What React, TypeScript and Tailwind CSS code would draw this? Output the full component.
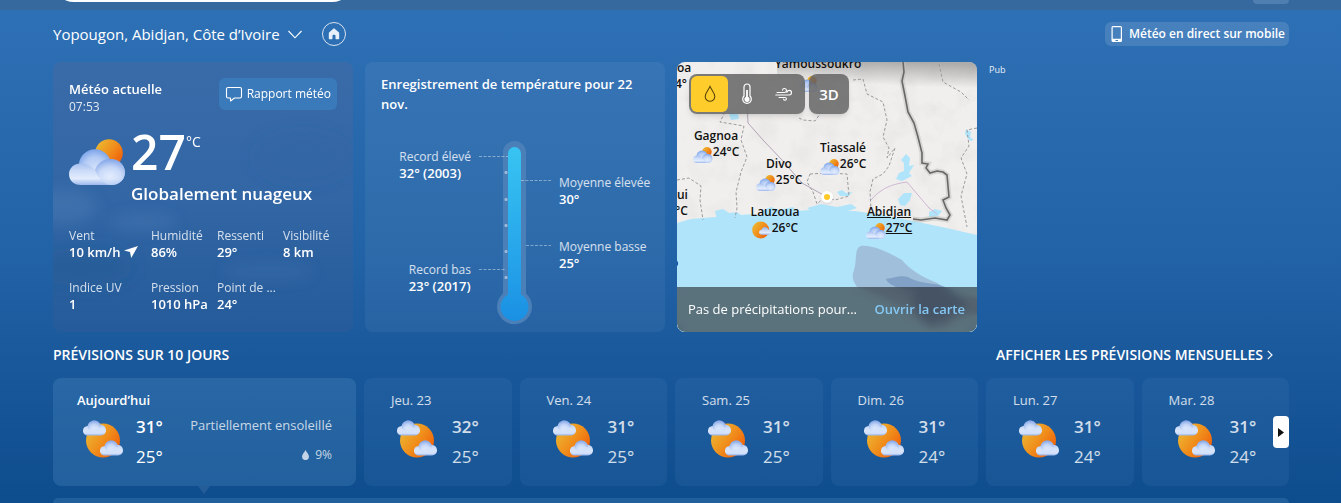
import type { ReactNode } from "react";

function SharedDefs() {
  return (
    <svg className="absolute h-0 w-0" aria-hidden="true">
      <defs>
        <linearGradient id="sun" x1="0.1" y1="0.2" x2="0.9" y2="0.8">
          <stop offset="0" stopColor="#ecb32f" />
          <stop offset="0.5" stopColor="#f08f1c" />
          <stop offset="1" stopColor="#f0620b" />
        </linearGradient>
        <radialGradient id="cloudBack" cx="0.5" cy="0.6" r="0.6">
          <stop offset="0" stopColor="#d3e1fa" />
          <stop offset="0.6" stopColor="#b3cbf5" />
          <stop offset="1" stopColor="#7ba3ea" />
        </radialGradient>
        <radialGradient id="cloudPuff" cx="0.5" cy="0.65" r="0.65">
          <stop offset="0" stopColor="#e6eefd" />
          <stop offset="0.55" stopColor="#c6d8f8" />
          <stop offset="1" stopColor="#7c9fe4" />
        </radialGradient>
        <linearGradient id="cloudFront" x1="0" y1="0" x2="0" y2="1">
          <stop offset="0" stopColor="#8fafec" />
          <stop offset="0.45" stopColor="#cbdbf8" />
          <stop offset="0.75" stopColor="#e2ecfd" />
          <stop offset="1" stopColor="#9db8ee" />
        </linearGradient>
      </defs>
    </svg>
  );
}

function MostlyCloudy({ className }: { className: string }) {
  return (
    <svg viewBox="0 0 56 46" className={className} aria-hidden="true">
      <circle cx="40" cy="14" r="13.8" fill="url(#sun)" />
      <circle cx="26" cy="26.5" r="16.2" fill="url(#cloudBack)" />
      <path
        d="M11.5 46C5 46 0 41.5 0 35.2 0 29 5 24.4 11.5 24.4c6 0 10 2.200 14.5 6.600C28.500 24.500 34 20 41.500 20 50 20 56 26 56 33.300 56 40.500 50.500 46 43 46Z"
        fill="url(#cloudFront)"
      />
      <path d="M26 31c2.500-6.500 8-11 15.500-11C50 20 56 26 56 33.300 56 40.500 50.500 46 43 46 34 46 29 38 26 31Z" fill="url(#cloudPuff)" opacity="0.7" />
    </svg>
  );
}

const smallCloud =
  "M5 15C2 15 0 13 0 10.200 0 7.500 2 5.600 4.600 5.500 5.400 2.300 8 0 11.200 0c3 0 5.500 1.800 6.500 4.600C20.800 4.500 23 6.800 23 9.800 23 12.800 20.800 15 18 15Z";

function PartlySunny({ className }: { className: string }) {
  return (
    <svg viewBox="0 0 41 38" className={className} aria-hidden="true">
      <circle cx="20" cy="20.500" r="17" fill="url(#sun)" />
      {["translate(0 0.500)", "translate(17 20.500)"].map((t) => (
        <g key={t} transform={t}>
          <path d={smallCloud} fill="url(#cloudFront)" />
          <circle cx="11.200" cy="6.500" r="6.400" fill="url(#cloudPuff)" opacity="0.75" />
          <path d="M0.500 11c1-3 5-4 8-1 3-4 9-5 14 0 0 2-2 3.600-4.500 3.600H5C2.500 13.600 1 12.500 0.500 11Z" fill="#d3e1fa" opacity="0.8" />
        </g>
      ))}
    </svg>
  );
}

function MostlySunny({ className }: { className: string }) {
  return (
    <svg viewBox="0 0 20 18" className={className} aria-hidden="true">
      <circle cx="9" cy="9" r="8.500" fill="url(#sun)" />
      <path d={smallCloud} transform="translate(7.500 6) scale(0.52)" fill="url(#cloudFront)" />
    </svg>
  );
}

function Stat({ label, children }: { label: string; children: ReactNode }) {
  return (
    <div className="min-w-0 text-xs leading-4">
      <dt className="truncate text-white/80">{label}</dt>
      <dd className="flex items-center gap-1 text-[13px] font-semibold whitespace-nowrap">{children}</dd>
    </div>
  );
}

function CurrentWeather() {
  return (
    <section className="relative h-[270px] w-[300px] shrink-0 overflow-hidden rounded-lg bg-linear-to-b from-[#3a6ba9] via-[#3266a5] to-[#255b9a] px-4 pt-4">
      <svg className="absolute inset-0 h-full w-full" viewBox="0 0 300 270" preserveAspectRatio="none" aria-hidden="true">
        <defs>
          <filter id="soft" x="-20%" y="-40%" width="140%" height="180%">
            <feGaussianBlur stdDeviation="7" />
          </filter>
        </defs>
        <g filter="url(#soft)">
          <ellipse cx="10" cy="145" rx="34" ry="18" fill="#6f9ccb" opacity="0.2" />
          <ellipse cx="90" cy="160" rx="34" ry="9" fill="#6f9ccb" opacity="0.18" />
          <ellipse cx="215" cy="210" rx="46" ry="9" fill="#5b8cc4" opacity="0.15" />
          <ellipse cx="250" cy="95" rx="50" ry="26" fill="#2a659f" opacity="0.25" />
          <ellipse cx="30" cy="205" rx="50" ry="20" fill="#1b5990" opacity="0.3" />
        </g>
      </svg>
      <div className="relative">
        <div className="flex items-start justify-between">
          <div className="pt-0.5">
            <h2 className="text-[13px] leading-[18px] font-semibold">Météo actuelle</h2>
            <p className="text-xs leading-[18px] text-white/85">07:53</p>
          </div>
          <button className="flex h-8 items-center gap-1 rounded-md bg-[#3a7aba] px-1.5 text-xs">
            <svg width="18" height="18" viewBox="0 0 18 18" fill="none" stroke="white" strokeWidth="1.100" aria-hidden="true">
              <path d="M3 2.500h12A1.500 1.500 0 0 1 16.500 4v7.500A1.500 1.500 0 0 1 15 13H9.500L5.500 16v-3H3a1.500 1.500 0 0 1-1.500-1.500V4A1.500 1.500 0 0 1 3 2.500Z" strokeLinejoin="round" />
            </svg>
            Rapport météo
          </button>
        </div>
        <div className="mt-2 flex gap-1.5">
          <MostlyCloudy className="mt-[15px] h-[46px] w-14 shrink-0" />
          <div>
            <p className="flex h-14 items-start text-5xl leading-[56px] font-semibold">
              27<span className="pt-1.5 text-sm leading-6 font-medium">°C</span>
            </p>
            <p className="text-[17px] leading-7 font-semibold whitespace-nowrap">Globalement nuageux</p>
          </div>
        </div>
        <dl className="mt-5 grid grid-cols-[82px_66px_66px_1fr] gap-y-5">
          <Stat label="Vent">
            10 km/h
            <svg width="14" height="12" viewBox="0 0 14 12" fill="white" aria-hidden="true">
              <path d="M0 4.500 14 0 7.200 12 6 6Z" />
            </svg>
          </Stat>
          <Stat label="Humidité">86%</Stat>
          <Stat label="Ressenti">29°</Stat>
          <Stat label="Visibilité">8 km</Stat>
          <Stat label="Indice UV">1</Stat>
          <Stat label="Pression">1010 hPa</Stat>
          <Stat label="Point de ...">24°</Stat>
        </dl>
      </div>
    </section>
  );
}

function Reading({ label, value }: { label: string; value: string }) {
  return (
    <div className="leading-[17px] whitespace-nowrap">
      <p className="text-xs leading-[17px] text-white/80">{label}</p>
      <p className="text-[13px] leading-[17px] font-semibold">{value}</p>
    </div>
  );
}

function TemperatureRecord() {
  return (
    <section className="h-[270px] w-[300px] shrink-0 rounded-lg bg-white/5 px-4 pt-3">
      <h2 className="text-[13px] leading-5 font-semibold">Enregistrement de température pour 22 nov.</h2>
      <div className="mt-6 grid grid-cols-[90px_72px_1fr] gap-x-2">
        <div className="flex flex-col items-end gap-[79px] pt-2.5">
          <Reading label="Record élevé" value="32° (2003)" />
          <Reading label="Record bas" value="23° (2017)" />
        </div>
        <svg width="72" height="188" viewBox="0 0 72 188" aria-hidden="true">
          <defs>
            <linearGradient id="mercury" x1="0" y1="9" x2="0" y2="184" gradientUnits="userSpaceOnUse">
              <stop offset="0" stopColor="#38c4f2" />
              <stop offset="0.600" stopColor="#27a6eb" />
              <stop offset="1" stopColor="#1a90e3" />
            </linearGradient>
          </defs>
          <path d="M24 14.500a11.500 11.500 0 0 1 23 0V155.500a17.500 17.500 0 1 1-23 0Z" fill="#4b7fb8" />
          <g fill="white" opacity="0.450">
            {[33, 60, 86, 112, 138, 164].map((y) => (
              <rect key={y} x="25.500" y={y} width="3" height="3" rx="1" />
            ))}
          </g>
          <g stroke="white" strokeOpacity="0.400" strokeDasharray="3 1.500">
            <path d="M0 18.500h29M0 131.500h26M42 42.500h30M47 107.500h25" />
          </g>
          <path d="M29 15.500a6.500 6.500 0 0 1 13 0V156.500a14 14 0 1 1-13 0Z" fill="url(#mercury)" />
        </svg>
        <div className="flex flex-col gap-[30px] pt-9">
          <Reading label="Moyenne élevée" value="30°" />
          <Reading label="Moyenne basse" value="25°" />
        </div>
      </div>
    </section>
  );
}

function City({ name, temp, place, icon }: { name: string; temp?: string; place: string; icon: ReactNode }) {
  return (
    <div className={`absolute flex -translate-x-1/2 flex-col items-center text-xs leading-4 font-semibold whitespace-nowrap text-[#111] ${place}`}>
      <span>{name}</span>
      <span className="flex h-4 items-center">
        {icon}
        {temp}
      </span>
    </div>
  );
}

function MapCard() {
  const cloudy = <MostlyCloudy className="mt-1.5 h-4 w-5" />;
  return (
    <section className="relative h-[270px] w-[300px] shrink-0 overflow-hidden rounded-lg bg-[#f0efed]">
      <svg className="absolute inset-0 h-full w-full" viewBox="0 0 300 270" aria-hidden="true">
        <defs>
          <linearGradient id="mapShade" x1="0.400" y1="1" x2="0.600" y2="0">
            <stop offset="0.400" stopColor="#777" stopOpacity="0" />
            <stop offset="1" stopColor="#777" stopOpacity="0.550" />
          </linearGradient>
          <filter id="terrain" x="0" y="0" width="100%" height="100%">
            <feTurbulence type="fractalNoise" baseFrequency="0.050" numOctaves="4" seed="4" />
            <feColorMatrix values="0 0 0 0 0.550  0 0 0 0 0.550  0 0 0 0 0.550  0.900 0 0 0 -0.400" />
          </filter>
        </defs>
        <rect width="300" height="180" filter="url(#terrain)" opacity="0.400" />
        <rect x="100" width="200" height="38" fill="url(#mapShade)" />
        <path d="M0 161 14 157 38 155 60 156 81 153 100 153 120 149 145 147 160 149 178 149 205 153 231 158 265 165 300 173V270H0Z" fill="#b0e4fb" />
        <g fill="#b0e4fb">
          <path d="M38 149l8-2 6 4 8-1 4 3 12-1-2 4-34 1ZM84 149l10-4 8 3 14-3 4 4-12 4H86ZM130 146l14-4 16 3 14-3 6 4-12 4-34-1Z" />
          <path d="M221 137l6-6 8 0-2 7-5 6-5-1ZM252 150l6-3 7 2-4 5-9 1Z" />
          <path d="M229 92l4 4-1 8 5-1-5 8 3 3-10 5-6-2 3-6 5-2 0-8-3-3ZM51 49l10 3 1 5-8 1Z" />
          <path d="M289 67l5 3-1 5 4 3-4 1-5-7ZM160 130l5-2 4 3 6-1-3 4-9 0Z" />
        </g>
        <g fill="none" stroke="#9b9a9d" strokeWidth="1" strokeDasharray="3 2">
          <path d="M48 50 43 60 67 64 64 78 70 95 64 110 59 130 60 146 58 156M122 56 126 58 138 59 143 52M176 18 186 17 190 32 206 40 210 58 206 75 212 86 210 96 218 86 212 104 206 112 196 117 193 130 194 148M133 112 150 111 170 112 172 134 158 138 148 135 140 142 136 130 130 120ZM262 2 266 20 284 30 292 38M0 118 12 116 24 124 23 138 26 158M300 66 290 68 292 84 284 96 290 112 284 134 290 165" />
        </g>
        <path d="M70 40 71 61 86 78 105 98 125 121 141 130 150 135" fill="none" stroke="#b2a4b8" strokeWidth="1" />
        <path d="M194 138c12-14 24-16 36-18l22 26 8 6" fill="none" stroke="#cdb7d3" strokeWidth="1" />
        <path d="M226 0 227 10 225 19 228 34 231 50 237 61 241 75 245 91 245 101 251 102 249 106 253 111 260 109 266 110 270 113 272 135 266 138 269 146 273 153 270 158 258 156 244 158 236 157" fill="none" stroke="#bdbdb9" strokeWidth="5" opacity="0.500" />
        <path d="M226 0 227 10 225 19 228 34 231 50 237 61 241 75 245 91 245 101 251 102 249 106 253 111 260 109 266 110 270 113 272 135 266 138 269 146 273 153 270 158 258 156 244 158 236 157" fill="none" stroke="#676767" strokeWidth="1.600" />
        <path d="M184 184C194 183 207 188 225 198 232 207 245 215 258 220 266 223 262 228 275 231L300 236 300 252 280 255 270 264 252 266 235 252 212 238 180 225C175 218 175 214 177 208 180 200 177 186 184 184Z" fill="#a0bfdb" />
        <path d="M209 217c8-1 14-4 22-2 10 6 22 6 32 8 14 5 24 14 28 22-14 4-26 18-42 15-8-7-18-21-12-31-10-1-26-5-28-12Z" fill="#7b9ac0" opacity="0.800" />
      </svg>

      <City name="Yamoussoukro" place="left-[141px] -top-1.5" icon={<MostlyCloudy className="mt-2 mr-5 h-4 w-5" />} />
      <City name="Gagnoa" temp="24°C" place="left-[39px] top-[66px]" icon={cloudy} />
      <City name="Divo" temp="25°C" place="left-[102px] top-[94px]" icon={cloudy} />
      <City name="Tiassalé" temp="26°C" place="left-[166px] top-[78px]" icon={cloudy} />
      <City name="Lauzoua" temp="26°C" place="left-[98px] top-[142px]" icon={<MostlySunny className="mt-1 h-[18px] w-5" />} />
      <City name="Abidjan" temp="27°C" place="left-[212px] top-[142px] underline" icon={cloudy} />
      <div className="absolute -top-0.5 left-0 text-xs leading-4 font-semibold text-[#111]">
        <p>oa</p>
        <p className="-ml-0.5">4°</p>
      </div>
      <div className="absolute top-[125px] left-0 text-xs leading-4 font-semibold text-[#111]">
        <p>ui</p>
        <p className="-ml-0.5">°C</p>
      </div>
      <p className="absolute top-[193px] -left-1.5 text-xs leading-4 font-semibold text-[#111]">o</p>
      <span className="absolute top-[129px] left-36 h-3 w-3 rounded-full border-[3px] border-white bg-[#ffc928] shadow" />

      <div className="absolute top-3 left-3 flex gap-1 text-white">
        <div className="flex h-10 w-[116px] rounded-lg bg-[#646464]/85 p-0.5 shadow-md backdrop-blur-[1px]">
          <button aria-label="Précipitations" className="flex flex-1 items-center justify-center rounded-md bg-[#ffcd2b]">
            <svg width="12" height="18" viewBox="0 0 12 18" fill="none" stroke="#5a4508" strokeWidth="1.100">
              <path d="M6 1.500C4.500 5 1.200 8 1.200 11.500a4.800 4.800 0 0 0 9.600 0C10.800 8 7.500 5 6 1.500Z" />
            </svg>
          </button>
          <button aria-label="Température" className="flex flex-1 items-center justify-center">
            <svg width="12" height="22" viewBox="0 0 12 22" fill="none" stroke="white" strokeWidth="1.200">
              <path d="M3 4a3 3 0 0 1 6 0v9a4.300 4.300 0 1 1-6 0Z" />
              <circle cx="6" cy="16.300" r="2" fill="white" />
              <path d="M6 7v9" strokeWidth="1.800" />
            </svg>
          </button>
          <button aria-label="Vent" className="flex flex-1 items-center justify-center">
            <svg width="18" height="14" viewBox="0 0 18 14" fill="none" stroke="white" strokeWidth="1.100" strokeLinecap="round">
              <path d="M2 5.500h7.500a2 2 0 1 0-2-2.200M0.800 8h13.400a2.300 2.300 0 1 0-2.300-2.500M4 10.500h6a1.400 1.400 0 1 1-1.400 1.600" />
            </svg>
          </button>
        </div>
        <button className="h-10 w-10 rounded-lg bg-[#646464]/85 text-[15px] font-semibold shadow-md">3D</button>
      </div>

      <div className="absolute inset-x-0 bottom-0 flex h-[45px] items-center justify-between bg-[#141414]/55 pr-3 pl-[11px] text-[13px] text-white backdrop-blur-[4px]">
        <span>Pas de précipitations pour...</span>
        <a href="#carte" className="font-semibold text-[#85c8f5]">
          Ouvrir la carte
        </a>
      </div>
    </section>
  );
}

const days = [
  { name: "Jeu. 23", high: "32°", low: "25°" },
  { name: "Ven. 24", high: "31°", low: "25°" },
  { name: "Sam. 25", high: "31°", low: "25°" },
  { name: "Dim. 26", high: "31°", low: "24°" },
  { name: "Lun. 27", high: "31°", low: "24°" },
  { name: "Mar. 28", high: "31°", low: "24°" },
];

function Forecast() {
  return (
    <div className="relative flex gap-2">
      <button className="relative flex h-[108px] w-[303px] shrink-0 flex-col rounded-lg bg-[#5a96cd]/25 px-6 pt-3 text-left">
        <span className="text-[13px] leading-5 font-semibold">Aujourd’hui</span>
        <span className="flex w-full pl-1.5">
          <PartlySunny className="mt-2.5 h-[38px] w-[41px]" />
          <span className="ml-3 flex flex-col text-[17px] leading-[30px]">
            <span className="pt-0.5 font-semibold">31°</span>
            <span>25°</span>
          </span>
          <span className="ml-auto flex flex-col items-end text-[13px] leading-[30px] text-white/75">
            <span>Partiellement ensoleillé</span>
            <span className="flex items-center gap-1.5 text-xs leading-[30px]">
              <svg width="7" height="10" viewBox="0 0 7 10" fill="#c3d4e8" aria-hidden="true">
                <path d="M3.500 0C2.500 2.500 0 4.300 0 6.600a3.500 3.500 0 0 0 7 0C7 4.300 4.500 2.500 3.500 0Z" />
              </svg>
              9%
            </span>
          </span>
        </span>
        <svg className="absolute top-full left-36" width="14" height="8" viewBox="0 0 14 8" aria-hidden="true">
          <path d="M1 0h12L7 8Z" fill="#255d98" />
        </svg>
      </button>
      {days.map((d) => (
        <button key={d.name} className="flex h-[108px] min-w-0 flex-1 flex-col rounded-lg bg-[#5a96cd]/12 pt-3 pl-[27px] text-left text-white/80">
          <span className="text-[13px] leading-5">{d.name}</span>
          <span className="flex pl-1.5">
            <PartlySunny className="mt-2.5 h-[38px] w-[41px]" />
            <span className="ml-3.5 flex flex-col text-[17px] leading-[30px]">
              <span className="pt-0.5 font-semibold">{d.high}</span>
              <span>{d.low}</span>
            </span>
          </span>
        </button>
      ))}
      <button aria-label="Jours suivants" className="absolute top-[38px] right-0 flex h-8 w-4 items-center justify-center rounded bg-white">
        <svg width="6" height="9" viewBox="0 0 6 9" fill="#111">
          <path d="M0 0l6 4.500L0 9Z" />
        </svg>
      </button>
    </div>
  );
}

export default function App() {
  return (
    <div className="flex min-h-screen flex-col bg-linear-to-b from-[#2f71b6] via-[#2262a6] to-[#0d4c8d] font-['Open_Sans',sans-serif] text-white">
      <SharedDefs />
      <div className="flex h-2.5 justify-between bg-[#366a9f] pr-[52px] pl-[53px]">
        <div className="h-0.5 w-[300px] overflow-hidden">
          <div className="-mt-10 h-[42px] rounded-full bg-white" />
        </div>
        <div className="h-1 w-9 rounded-b-md bg-[#4f7eb0]" />
      </div>
      <main className="flex flex-1 flex-col pr-[52px] pl-[53px]">
        <header className="flex h-[52px] items-center justify-between pb-1">
          <div className="flex items-center gap-5">
            <button className="flex items-center gap-2 text-[15px] leading-5">
              Yopougon, Abidjan, Côte d’Ivoire
              <svg width="14" height="9" viewBox="0 0 14 9" fill="none" stroke="white" strokeWidth="1.100" aria-hidden="true">
                <path d="M0.500 1 7 7.800 13.500 1" />
              </svg>
            </button>
            <button aria-label="Définir comme domicile" className="flex h-6 w-6 items-center justify-center rounded-full border border-white/80">
              <svg width="12" height="12" viewBox="0 0 12 12" fill="#e6effa">
                <path d="M5.300 0.700a1 1 0 0 1 1.400 0l4 3.600c.3.300.5.700.5 1.100v4.800c0 .6-.4 1-1 1H8.300a.8.800 0 0 1-.8-.8V7.800a1 1 0 0 0-1-1h-1a1 1 0 0 0-1 1v2.600c0 .4-.4.800-.8.800H1.800c-.6 0-1-.4-1-1V5.400c0-.4.200-.8.500-1.100Z" />
              </svg>
            </button>
          </div>
          <a href="#mobile" className="flex h-6 items-center gap-1.5 rounded-md bg-white/12 pr-1 pl-1.5 text-xs font-semibold">
            <svg width="12" height="16" viewBox="0 0 12 16" aria-hidden="true">
              <path fillRule="evenodd" fill="white" d="M2 0h7.500a1.500 1.500 0 0 1 1.500 1.500v13A1.500 1.500 0 0 1 9.500 16H2A1.500 1.500 0 0 1 .5 14.500v-13A1.500 1.500 0 0 1 2 0Zm-.300 1.200v11.600h8.100V1.200ZM4.500 14v1h2.500v-1Z" />
            </svg>
            Météo en direct sur mobile
          </a>
        </header>
        <div className="flex gap-3">
          <CurrentWeather />
          <TemperatureRecord />
          <MapCard />
          <span className="text-[9px] leading-4 text-white/90">Pub</span>
        </div>
        <div className="flex h-[46px] items-center justify-between pr-4 text-sm font-semibold">
          <h2>PRÉVISIONS SUR 10 JOURS</h2>
          <a href="#mensuel" className="flex items-center gap-1">
            AFFICHER LES PRÉVISIONS MENSUELLES
            <svg width="6" height="10" viewBox="0 0 6 10" fill="none" stroke="white" strokeWidth="1.200" aria-hidden="true">
              <path d="M0.800 0.800 5 5 0.800 9.200" />
            </svg>
          </a>
        </div>
        <Forecast />
        <div className="mt-3 flex-1 rounded-t-lg bg-[#5a96cd]/25" />
      </main>
    </div>
  );
}
